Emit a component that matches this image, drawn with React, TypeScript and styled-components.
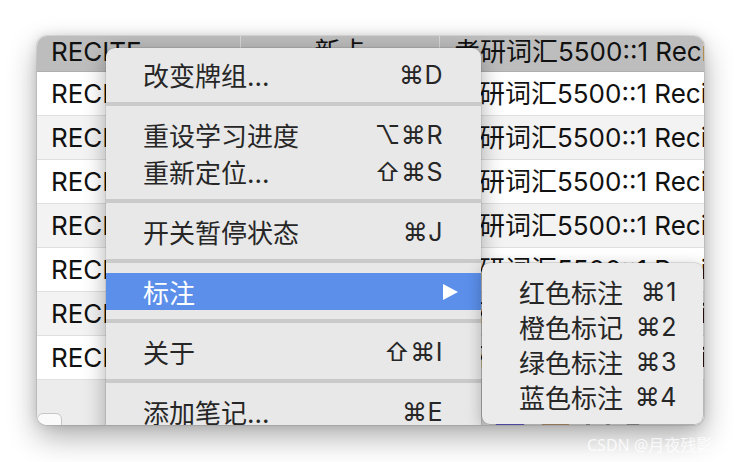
import React from "react";
import styled, { createGlobalStyle } from "styled-components";

const Global = createGlobalStyle`
  html, body { margin: 0; padding: 0; background: #ffffff; }
  * { box-sizing: border-box; }
`;

const FONT = `"Inter", "Noto Sans CJK SC", "DejaVu Sans", sans-serif`;

const Page = styled.div`
  position: relative;
  width: 740px;
  height: 462px;
  overflow: hidden;
  padding: 36px 0 0 37px;
  background: #ffffff;
  font-family: ${FONT};
`;

const Window = styled.div`
  position: relative;
  width: 667px;
  height: 389px;
  border-radius: 10px;
  overflow: hidden;
  background: #ffffff;
  box-shadow: 0 12px 30px rgba(0, 0, 0, 0.32), 0 0 12px rgba(0, 0, 0, 0.12),
    0 0 0 1px rgba(0, 0, 0, 0.08);
  display: flex;
  flex-direction: column;
`;

const COLS = "203px 199px 265px";

const HeaderRow = styled.div`
  display: grid;
  grid-template-columns: ${COLS};
  height: 36px;
  background: #bdbdbd;
  border-bottom: 1px solid #aeaeae;
  flex: none;
`;

const HeaderCell = styled.div<{ $center?: boolean; $sep?: boolean }>`
  font-size: 26px;
  line-height: 32px;
  color: #111;
  padding: 0 13px 0 14px;
  white-space: nowrap;
  overflow: hidden;
  text-align: ${(p) => (p.$center ? "center" : "left")};
  border-left: ${(p) => (p.$sep ? "1px solid #d9d9d9" : "none")};
`;

const Row = styled.div<{ $alt?: boolean }>`
  display: grid;
  grid-template-columns: ${COLS};
  height: 44px;
  flex: none;
  background: ${(p) => (p.$alt ? "#f3f3f3" : "#ffffff")};
  border-bottom: 1px solid #dfdfdf;
`;

const Cell = styled.div<{ $center?: boolean }>`
  font-size: 26px;
  line-height: 43px;
  color: #111;
  padding: 0 13px 0 14px;
  white-space: nowrap;
  overflow: hidden;
  text-align: ${(p) => (p.$center ? "center" : "left")};
`;

const Footer = styled.div`
  flex: 1;
  background: #ececec;
  display: flex;
  align-items: flex-start;
  padding-top: 33px;
`;

const FooterButton = styled.div`
  width: 25px;
  height: 22px;
  border-radius: 6px;
  background: #fafafa;
  border: 1px solid #c6c6c6;
`;

const SwatchGroup = styled.div`
  display: flex;
  gap: 16px;
  margin-left: 433px;
  margin-top: 10px;
`;

const Swatch = styled.div<{ $color: string; $w: number }>`
  width: ${(p) => p.$w}px;
  height: 16px;
  border-radius: 4px;
  background: ${(p) => p.$color};
`;

const Menu = styled.div`
  position: absolute;
  left: 69px;
  top: 12px;
  width: 375px;
  height: 420px;
  padding-top: 8px;
  background: #e8e8e8;
  border-radius: 9px 9px 0 0;
  box-shadow: 0 6px 22px rgba(0, 0, 0, 0.33), 0 0 0 0.5px rgba(0, 0, 0, 0.15);
  font-size: 26px;
  color: #262626;
`;

const MenuItem = styled.div<{ $active?: boolean }>`
  display: flex;
  align-items: center;
  justify-content: space-between;
  height: 37px;
  padding: 0 38px 0 37px;
  white-space: nowrap;
  background: ${(p) => (p.$active ? "#5b8fea" : "transparent")};
  color: ${(p) => (p.$active ? "#ffffff" : "#262626")};
`;

const Shortcut = styled.span`
  font-size: 25px;
  letter-spacing: 0.5px;
`;

const Arrow = styled.svg`
  width: 16px;
  height: 16px;
  margin-right: -15px;
`;

const Separator = styled.div`
  height: 4px;
  margin: 9px 0 10px;
  background: #cacaca;
`;

const Submenu = styled.div`
  position: absolute;
  left: 445px;
  top: 227px;
  width: 221px;
  height: 161px;
  padding: 11px 26px 9px 37px;
  background: #ebebeb;
  border-radius: 8px;
  box-shadow: 0 4px 16px rgba(0, 0, 0, 0.28), 0 0 0 0.5px rgba(0, 0, 0, 0.2);
  font-size: 26px;
  color: #262626;
`;

const SubItem = styled.div`
  display: flex;
  align-items: center;
  justify-content: space-between;
  height: 35px;
  white-space: nowrap;
`;

const Watermark = styled.div`
  position: absolute;
  left: 587px;
  top: 432px;
  font-size: 16px;
  color: rgba(255, 255, 255, 0.8);
  white-space: nowrap;
  font-family: "Noto Sans", "Noto Sans CJK SC", sans-serif;
`;

const rows = Array.from({ length: 7 });

const submenu = [
  ["红色标注", "⌘1"],
  ["橙色标记", "⌘2"],
  ["绿色标注", "⌘3"],
  ["蓝色标注", "⌘4"],
];

export default function App() {
  return (
    <>
      <Global />
      <Page>
        <Window>
          <HeaderRow>
            <HeaderCell>RECITE</HeaderCell>
            <HeaderCell $center $sep>
              新卡
            </HeaderCell>
            <HeaderCell $sep>考研词汇5500::1 Recite</HeaderCell>
          </HeaderRow>
          {rows.map((_, i) => (
            <Row key={i} $alt={i % 2 === 1}>
              <Cell>RECITE</Cell>
              <Cell $center>新卡</Cell>
              <Cell>考研词汇5500::1 Recite</Cell>
            </Row>
          ))}
          <Footer>
            <FooterButton />
            <SwatchGroup>
              <Swatch $color="#6a63d8" $w={30} />
              <Swatch $color="#c9a07a" $w={29} />
              <Swatch $color="#9a9a9a" $w={4} />
              <Swatch $color="#9a9a9a" $w={4} />
              <Swatch $color="#a0a0a0" $w={14} />
            </SwatchGroup>
          </Footer>

          <Menu>
            <MenuItem>
              <span>改变牌组...</span>
              <Shortcut>⌘D</Shortcut>
            </MenuItem>
            <Separator />
            <MenuItem>
              <span>重设学习进度</span>
              <Shortcut>⌥⌘R</Shortcut>
            </MenuItem>
            <MenuItem>
              <span>重新定位...</span>
              <Shortcut>⇧⌘S</Shortcut>
            </MenuItem>
            <Separator />
            <MenuItem>
              <span>开关暂停状态</span>
              <Shortcut>⌘J</Shortcut>
            </MenuItem>
            <Separator />
            <MenuItem $active>
              <span>标注</span>
              <Arrow viewBox="0 0 16 16">
                <path d="M1 0 L16 8 L1 16 Z" fill="#ffffff" />
              </Arrow>
            </MenuItem>
            <Separator />
            <MenuItem>
              <span>关于</span>
              <Shortcut>⇧⌘I</Shortcut>
            </MenuItem>
            <Separator />
            <MenuItem>
              <span>添加笔记...</span>
              <Shortcut>⌘E</Shortcut>
            </MenuItem>
          </Menu>

          <Submenu>
            {submenu.map(([label, key]) => (
              <SubItem key={label}>
                <span>{label}</span>
                <Shortcut>{key}</Shortcut>
              </SubItem>
            ))}
          </Submenu>
        </Window>
        <Watermark>CSDN @月夜残影</Watermark>
      </Page>
    </>
  );
}
